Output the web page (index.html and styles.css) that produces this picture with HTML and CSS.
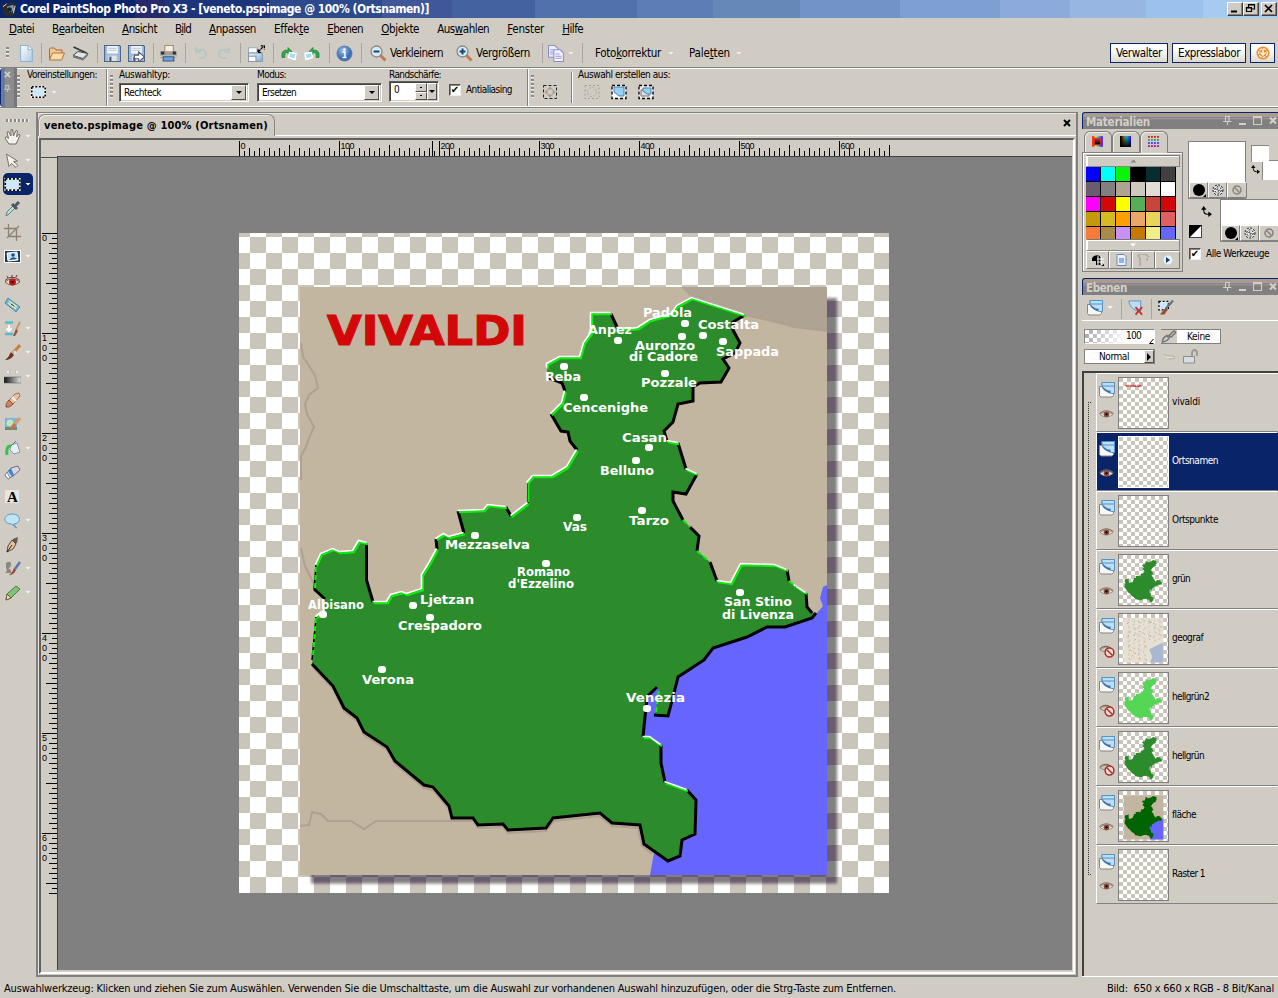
FILE: index.html
```html
<!DOCTYPE html>
<html lang="de">
<head>
<meta charset="utf-8">
<title>Corel PaintShop Photo Pro X3</title>
<link rel="stylesheet" href="styles.css">
</head>
<body>
<svg class="defs" width="0" height="0">
  <defs>
    <linearGradient id="gBlue" x1="0" y1="0" x2="1" y2="1"><stop offset="0" stop-color="#eaf6fd"/><stop offset="1" stop-color="#7fb0dc"/></linearGradient>
    <linearGradient id="gWhite" x1="0" y1="0" x2="1" y2="1"><stop offset="0" stop-color="#ffffff"/><stop offset="1" stop-color="#a9c8e6"/></linearGradient>
    <linearGradient id="gGrad" x1="0" x2="1"><stop offset="0" stop-color="#111"/><stop offset="1" stop-color="#e4e4e4"/></linearGradient>
    <radialGradient id="gInfo" cx=".4" cy=".3"><stop offset="0" stop-color="#9cc3ee"/><stop offset="1" stop-color="#3c6fb5"/></radialGradient>
    <linearGradient id="gRain" x1="0" x2="1"><stop offset="0" stop-color="#f00"/><stop offset=".3" stop-color="#ff0"/><stop offset=".6" stop-color="#0cf"/><stop offset="1" stop-color="#40f"/></linearGradient>
    <linearGradient id="gFade" x1="0" y1="0" x2="0" y2="1"><stop offset="0" stop-color="#000" stop-opacity="0"/><stop offset="1" stop-color="#000"/></linearGradient>
    <linearGradient id="gFadeL" x1="0" x2="1"><stop offset="0" stop-color="#000"/><stop offset=".7" stop-color="#000" stop-opacity="0"/></linearGradient>
  </defs>
  <symbol id="i-new" viewBox="0 0 16 16"><path d="M2.500.5h7l4 4v11h-11z" fill="url(#gWhite)" stroke="#8fb0d0"/><path d="M9.500.5v4h4" fill="#fff" stroke="#8fb0d0"/></symbol>
  <symbol id="i-open" viewBox="0 0 17 16"><path d="M1.500 14V3.500l1-1h4l1.500 2h6v3" fill="#f4c88c" stroke="#a8683a"/><path d="M1.500 14.500l3-7h12l-3 7z" fill="#fbdcaa" stroke="#b27440"/></symbol>
  <symbol id="i-scan" viewBox="0 0 17 16"><path d="M1.500 1.500l13 6" stroke="#333" stroke-width="1.500"/><path d="M1 10l5-4 10 2-5 5z" fill="#dfe3e8" stroke="#444"/><path d="M1 10v2l10 3 5-5V8l-5 5z" fill="#777"/></symbol>
  <symbol id="i-save" viewBox="0 0 16 16"><path d="M.5.5h14l1 1v14H.5z" fill="#9dbde2" stroke="#4c6788"/><path d="M3 1h10v7H3z" fill="#f4f7fa"/><path d="M4 3h8M4 5h8" stroke="#b8c2cc"/><path d="M4 10h8v5H4z" fill="#e2e5e8"/><path d="M5 11h2v4H5z" fill="#42536b"/></symbol>
  <symbol id="i-saveas" viewBox="0 0 16 16"><use href="#i-save"/><path d="M6 9.500h4v-3l5.500 4.800L10 16v-3H6z" fill="#fff" stroke="#556"/></symbol>
  <symbol id="i-print" viewBox="0 0 16 16"><path d="M4.500 0.500h8v6h-8z" fill="#f9ecd8" stroke="#9b8d80"/><path d="M0 6h16v6H0z" fill="#a09e9c"/><path d="M1 6h3v3H1zM12 6h3v3h-3z" fill="#333"/><path d="M0 10h16v1H0z" fill="#ddd"/><path d="M3 11h10v4H3z" fill="#6ba3d8" stroke="#385878"/></symbol>
  <symbol id="i-undo" viewBox="0 0 14 14"><path d="M3 4h5a4 4 0 0 1 0 8H5M2 1v5h5" fill="none" stroke="#b5c8c4" stroke-width="2"/></symbol>
  <symbol id="i-resize" viewBox="0 0 16 16"><path d="M.5 2.500h8v5H.5z" fill="#fff" stroke="#9ab"/><path d="M.5 7.500h13v8H.5z" fill="url(#gBlue)" stroke="#8898a8"/><path d="M.5 10.500h7v5h-7z" fill="#fff" stroke="#89a"/><path d="M10 6l4.500-4.500M12 .8h3.500v3.500M9.500 4v3h3" fill="none" stroke="#000" stroke-width="1.200" stroke-dasharray="2.500 .6"/></symbol>
  <symbol id="i-rot" viewBox="0 0 17 14"><path d="M2 11C1 4 5 3 8 4V1l4 4-4 3V6C5 5.500 4.500 8 5 11z" fill="#2fa84a" stroke="#1c7a34" stroke-width=".7"/><path d="M9.500 6l6.500 1-1 6-6.500-2z" fill="#a5ddf6" stroke="#fff" stroke-width="1.500"/></symbol>
  <symbol id="i-info" viewBox="0 0 17 17"><circle cx="8.500" cy="8.500" r="7.500" fill="url(#gInfo)" stroke="#5878a8"/><circle cx="8.500" cy="4.500" r="1.300" fill="#fff"/><path d="M6.500 7h2.500v5.500h1.500M6.500 12.500h4" fill="none" stroke="#fff" stroke-width="1.400"/></symbol>
  <symbol id="i-zoom" viewBox="0 0 17 17"><path d="M10 10l5.500 5.500" stroke="#c5784a" stroke-width="3"/><circle cx="6.500" cy="6.500" r="5.500" fill="#d6ecfa" stroke="#8b8783" stroke-width="1.300"/><path d="M3.500 6.500h6" stroke="#1c4468" stroke-width="2"/></symbol>
  <symbol id="i-copy" viewBox="0 0 16 16"><path d="M.5.500h6l3 3v8h-9z" fill="#eef" stroke="#8a8cca"/><path d="M5.500 4.500h6l3 3v8h-9z" fill="#f4f4ff" stroke="#8a8cca"/><path d="M7 8.500h4M7 10.500h6M7 12.500h6M2 4.500h3M2 6.500h3M2 8.500h3" stroke="#9a9cda"/></symbol>
  <symbol id="i-sel" viewBox="0 0 15 12"><path d="M.8.8h13.400v10.400H.8z" fill="#cfe8f5" stroke="#fff" stroke-width="1.500"/><path d="M.8.8h13.400v10.400H.8z" fill="none" stroke="#000" stroke-width="1.500" stroke-dasharray="2 1.500"/></symbol>
  <symbol id="i-mod" viewBox="0 0 16 16"><path d="M1.500 1.500h13v13h-13z" fill="none" stroke="#222" stroke-width="1" stroke-dasharray="3 2"/><path d="M8 2.500l3 3H5zM8 13.500l3-3H5zM2.500 8l3-3v6zM13.500 8l-3-3v6z" fill="#a89c90"/></symbol>
  <symbol id="i-dis" viewBox="0 0 16 16"><path d="M1 1.500h14v13H1z" fill="none" stroke="#a89e94" stroke-dasharray="2 2"/><circle cx="8" cy="8" r="4.500" fill="none" stroke="#b0a69c" stroke-dasharray="2 1.500"/></symbol>
  <symbol id="i-selras" viewBox="0 0 16 16"><path d="M1 1.500h14v13H1z" fill="#fff" stroke="#000" stroke-width="1.300" stroke-dasharray="3 2"/><path d="M3 3h10v9H8L3 8z" fill="#9cd0ee" stroke="#4883b8"/></symbol>
  <symbol id="i-selvec" viewBox="0 0 16 16"><path d="M1 1.500h14v13H1z" fill="#eee" stroke="#000" stroke-width="1.300" stroke-dasharray="3 2"/><path d="M3 6h8v6H3z" fill="#ddd" stroke="#777"/><path d="M5 4h8v6H9L5 7z" fill="#9cd0ee" stroke="#4883b8"/></symbol>
  <symbol id="i-layer" viewBox="0 0 16 17"><path d="M.5 5.500h14v9l-1.500 1.500H2l-1.500-1.500z" fill="#f7f7f4" stroke="#858585"/><path d="M3 1.500h12.500v11h-3Q5 10 3 4z" fill="#c0daf2" stroke="#5792c0"/><path d="M3 1.500h12.500V5H3z" fill="#b4e2f8" stroke="#5792c0"/><path d="M2.500 5.500q2 5 9 7V9.500q-3 .5-4.500-1z" fill="#3374b0"/><path d="M7 6h8v5.500h-3V9q-3 0-5-3z" fill="#c4dcf4"/></symbol>
  <symbol id="i-del" viewBox="0 0 17 17"><path d="M1 1.500h12.500v10.500H9Q2.500 9 1 3z" fill="#bcdcf4" stroke="#5792c0"/><path d="M8 8l7 8M15 8l-7 8" stroke="#c8302c" stroke-width="2"/></symbol>
  <symbol id="i-maskbrush" viewBox="0 0 17 17"><path d="M1 2h10v9H1z" fill="#cfe8f5" stroke="#000" stroke-width="1.400" stroke-dasharray="2 2"/><path d="M16 1L8 10" stroke="#69737e" stroke-width="2.500"/><path d="M8 9l2 2-3 5H2z" fill="#9a4c30"/></symbol>
  <symbol id="i-eye" viewBox="0 0 15 9"><path d="M1 5Q7 0 14 5 7 10 1 5z" fill="#f4ece4" stroke="#9c8c7c"/><circle cx="7.500" cy="4.800" r="2.900" fill="#8a5040"/><circle cx="7.500" cy="4.800" r="1.200" fill="#1b0c08"/><path d="M.5 4Q7-1.500 14.500 4" fill="none" stroke="#7c6c60"/></symbol>
  <symbol id="i-eyeoff" viewBox="0 0 17 13"><path d="M1 5Q6 0 13 4 7 9 1 5z" fill="#cfc6ba" stroke="#9a8c7c"/><path d="M.5 4Q6-1 12 3" fill="none" stroke="#6c5c50"/><circle cx="10.500" cy="7.500" r="4.400" fill="#e9dcd6" stroke="#b02c28" stroke-width="1.500"/><path d="M7.500 4.500l6 6" stroke="#b02c28" stroke-width="1.500"/></symbol>
  <symbol id="i-pin" viewBox="0 0 9 9"><path d="M2.500 0v5M6 0v5M2 .5h5M0 5.500h8.500M4.500 5.500V9" stroke="#d4d0c8" stroke-width="1.100" fill="none"/></symbol>
  <symbol id="i-x" viewBox="0 0 8 8"><path d="M1 1l6 6M7 1L1 7" stroke="#d4d0c8" stroke-width="2"/></symbol>
  <symbol id="i-swap" viewBox="0 0 12 12"><path d="M3 3v2q0 4 4 4h2" fill="none" stroke="#000" stroke-width="1.200"/><path d="M0 4l3-4 3 4zM8 6v6l4-3z"/></symbol>
  <symbol id="i-app" viewBox="0 0 16 16"><path d="M0 4l5-3 8-1 2 4-1 8-3 4-7-1-3-4z" fill="#282b30"/><path d="M5 5l7-2 1 6-5 2z" fill="#7e97a5"/><circle cx="8" cy="8" r="2.500" fill="#121f2c"/><path d="M1 5l4-3M12 12l2-8" stroke="#d8dfe3"/></symbol>
  <symbol id="t-0" viewBox="0 0 17 17"><path d="M5 16L1 10l1-1.500 2.500 2L3 4l1.500-.5L7 8 7 1.500h1.500L9.500 8 12 2.500l1.500.5L12.500 9l2.500-3 1 1-3 7-1 2z" fill="#f4f1ed" stroke="#756d66"/></symbol>
  <symbol id="t-1" viewBox="0 0 17 17"><path d="M2.500 2l11 7-4 .5 4.500 4-2 2-4.500-4-2.500 3z" fill="#f4f0ea" stroke="#77706a"/></symbol>
  <symbol id="t-3" viewBox="0 0 17 17"><path d="M2 16l1-4 6-6 2 2-6 6z" fill="#b6e2d0" stroke="#678"/><path d="M8 4l5 5M11 6l4-4" stroke="#4c5668" stroke-width="3"/></symbol>
  <symbol id="t-4" viewBox="0 0 17 17"><path d="M4.500 0v12.500H17M0 4.500h12.500V17M3 14L15 2" fill="none" stroke="#8d8272" stroke-width="1.300"/></symbol>
  <symbol id="t-5" viewBox="0 0 17 17"><path d="M.5 2.500h16v12H.5z" fill="#263850" stroke="#fff"/><path d="M3 5l10-1 1 8-10 1z" fill="#bfe4f7" stroke="#fff"/><circle cx="9" cy="7" r="1.800" fill="#244a78"/><path d="M5 12q4-5 8-1z" fill="#244a78"/></symbol>
  <symbol id="t-6" viewBox="0 0 17 17"><path d="M1 10Q8 4 16 10 8 16 1 10z" fill="#f4ded4" stroke="#806050"/><circle cx="8.500" cy="10" r="3.500" fill="#c01818"/><circle cx="8.500" cy="10" r="1.300" fill="#400"/><path d="M1 8.500Q8 2 16 8.500M3 4l1 2M8 3v2M13 3l-1 2" fill="none" stroke="#633"/></symbol>
  <symbol id="t-7" viewBox="0 0 17 17"><path d="M4 2l12 9-4 5L1 7z" fill="#6ab6dc" stroke="#4e8cb4"/><path d="M5 5l8 6M4 7l8 6" stroke="#f8e6a0" stroke-width="1.500"/><path d="M7 8l3 2" stroke="#234"/></symbol>
  <symbol id="t-8" viewBox="0 0 17 17"><path d="M1 2.500h8M1 14h8" stroke="#54bccc" stroke-width="2.500"/><path d="M5 5v5M2.500 8.500L5 11l2.500-2.500" stroke="#fff" stroke-width="1.800" fill="none"/><path d="M16 2l-4 8" stroke="#c89468" stroke-width="2"/><path d="M12 9l2 2-3 5h-2z" fill="#a04828"/></symbol>
  <symbol id="t-9" viewBox="0 0 17 17"><path d="M16 1L9 9" stroke="#c88040" stroke-width="3"/><path d="M10 7l2 3" stroke="#ddd" stroke-width="2.500"/><path d="M7 8l3 3q-3 5-9 5 4-3 6-8z" fill="#70361e"/></symbol>
  <symbol id="t-10" viewBox="0 0 17 17"><path d="M0 9h17v6H0z" fill="url(#gGrad)" stroke="#555" stroke-width=".5"/><path d="M2 4l3-3v6zM15 4l-3-3v6z" fill="#f7f7f2" stroke="#aaa" stroke-width=".5"/></symbol>
  <symbol id="t-11" viewBox="0 0 17 17"><path d="M11 2l4-1 1 3-7 8-4-4z" fill="#eac29c" stroke="#a07050"/><path d="M8 5l4 4" stroke="#eee" stroke-width="2"/><path d="M5 8l4 4q-3 4-7 3-1-3 3-7z" fill="#d88068" stroke="#8c4a3c"/></symbol>
  <symbol id="t-12" viewBox="0 0 17 17"><path d="M1 2h12v12H1z" fill="#7cb2de"/><circle cx="6" cy="7" r="3.500" fill="#bfe8b4"/><path d="M1 14h12v-3H1z" fill="#5d9470"/><path d="M16 2l-5 6" stroke="#d0a070" stroke-width="3.500"/><path d="M11 8l-4 5" stroke="#c87058" stroke-width="3.500"/></symbol>
  <symbol id="t-13" viewBox="0 0 17 17"><path d="M7 5l6-2 3 9-6 2-4-4z" fill="#e6eef6" stroke="#8898a8"/><path d="M7 6l5-5" stroke="#678"/><path d="M7 6Q2 5 3 15" fill="none" stroke="#38c04c" stroke-width="3"/></symbol>
  <symbol id="t-14" viewBox="0 0 17 17"><path d="M7 4l7-2 2 4-7 6-5 3-3-4z" fill="#d4d8de" stroke="#6b7280"/><path d="M7 4l3 7-2 2-4-6z" fill="#4a84d0"/><path d="M3 8l3 6-2 1-3-4z" fill="#fff" stroke="#889"/></symbol>
  <symbol id="t-15" viewBox="0 0 17 17"><path d="M1 2h14v13H1z" fill="#e8e4de"/><text x="3" y="14" class="serif-a">A</text></symbol>
  <symbol id="t-16" viewBox="0 0 17 17"><path d="M8.500 2c9 0 9 10 1 10l3 4-5-4c-9 0-9-10 1-10z" fill="#bfe4f6" stroke="#5f96bc"/></symbol>
  <symbol id="t-17" viewBox="0 0 17 17"><path d="M9 3l5-2-1 6-2 1-3-3z" fill="#66564c"/><path d="M8 4l4 4-3 5-6 3 1-6z" fill="#e6c49c" stroke="#59493c"/><path d="M3 16l5-7" stroke="#222"/></symbol>
  <symbol id="t-18" viewBox="0 0 17 17"><path d="M2 3q5-3 5 1T4 8q4 2 3 5H1q3-2 1-5z" fill="#8a8782"/><path d="M16 2l-5 7" stroke="#5878b0" stroke-width="2.500"/><path d="M10 8l2 2q-2 5-7 5 4-3 5-7z" fill="#9a4c30"/></symbol>
  <symbol id="t-19" viewBox="0 0 17 17"><path d="M12 2l4 3-9 9-5 2 1-6z" fill="#7cc474" stroke="#4c8048"/><path d="M3 10l4 4-5 2z" fill="#f0d8b4" stroke="#754"/></symbol>

  <path id="region" d="M591 313H611L617 327 630 329 638 328 650 320 672 314 677 306 692 298 745 315 733 322V330L740 343 735 353 723 359 729 368 721 382 700 383 693 387V401L678 404 673 422 664 431 667 441 678 443 686 469 697 474 686 494 673 492V501L683 520 699 536 697 551 710 562 717 581 731 583 741 564 775 565 787 570 789 581 806 593 807 607 812 613 816 613 812 618 785 627 767 627 747 637 713 648 704 660 678 677 673 697 668 716 655 715 659 690 656 687 647 697 643 737 650 737 661 745V763L665 782 687 790 696 800 695 834 682 840 680 856 668 861 644 844 640 825 612 823 600 813 553 818 546 828 508 830 503 824 478 825 473 818H452L449 806 433 787 424 785 395 761 387 747 364 732 357 718 344 708 333 686 312 664 316 617 325 610V599L314 589 316 565 321 554 333 549 340 552 353 551 359 541 367 543V580L373 602H387L391 595 402 592 407 594 422 589V575L430 562 437 549 436 539 444 534 449 537 464 533 458 511 484 510 488 505 506 507 511 516 528 503V483L533 476H552L567 467 577 450 570 441 568 432 561 431 551 414 562 403 565 391 562 383 547 377V364L560 357H580L584 343 592 332Z"/>
  <path id="sea" d="M827 585L823 587 820 598 823 606 816 614 810 610 640 650 630 740 660 840 654 853 650 875H827Z"/>
</svg>

<header class="titlebar">
  <svg class="appicon"><use href="#i-app"/></svg>
  <span class="title" data-w="409">Corel PaintShop Photo Pro X3 - [veneto.pspimage @ 100% (Ortsnamen)]</span>
  <div class="winbtns">
    <b><svg viewBox="0 0 13 11"><path d="M3 8.500h6" stroke="#000" stroke-width="2"/></svg></b>
    <b><svg viewBox="0 0 13 11"><path d="M4.500 4V1.500h6V6H8M4 2h7" fill="none" stroke="#000" stroke-width="1.200"/><path d="M2.500 4.500h5v4h-5zM2 5h6" fill="none" stroke="#000" stroke-width="1.200"/></svg></b>
    <b class="close"><svg viewBox="0 0 13 11"><path d="M3 2l7 7M10 2l-7 7" stroke="#000" stroke-width="1.700"/></svg></b>
  </div>
</header>

<nav class="menu">
  <span data-w="25"><u>D</u>atei</span><span data-w="52">B<u>e</u>arbeiten</span><span data-w="35"><u>A</u>nsicht</span><span data-w="16">B<u>i</u>ld</span><span data-w="47"><u>A</u>npassen</span><span data-w="35">Effek<u>t</u>e</span><span data-w="36"><u>E</u>benen</span><span data-w="38"><u>O</u>bjekte</span><span data-w="52">Aus<u>w</u>ahlen</span><span data-w="37"><u>F</u>enster</span><span data-w="21"><u>H</u>ilfe</span>
</nav>

<div class="toolbar">
  <i class="grip g4"></i>
  <svg class="ic"><use href="#i-new"/></svg><i class="sep"></i>
  <svg class="ic"><use href="#i-open"/></svg><svg class="ic"><use href="#i-scan"/></svg><i class="sep"></i>
  <svg class="ic"><use href="#i-save"/></svg><svg class="ic"><use href="#i-saveas"/></svg><i class="sep"></i>
  <svg class="ic"><use href="#i-print"/></svg><i class="sep"></i>
  <svg class="ic sm"><use href="#i-undo"/></svg><svg class="ic sm flip"><use href="#i-undo"/></svg><i class="sep"></i>
  <svg class="ic"><use href="#i-resize"/></svg><i class="sep"></i>
  <svg class="ic"><use href="#i-rot"/></svg><svg class="ic flip"><use href="#i-rot"/></svg><i class="sep"></i>
  <svg class="ic"><use href="#i-info"/></svg><i class="sep"></i>
  <svg class="ic"><use href="#i-zoom"/></svg><span data-w="53">Verkleinern</span>
  <svg class="ic" viewBox="0 0 17 17"><use href="#i-zoom" width="17" height="17"/><path d="M6.500 3.500v6" stroke="#1c4468" stroke-width="2"/></svg><span data-w="54">Vergrößern</span><i class="sep"></i>
  <svg class="ic"><use href="#i-copy"/></svg><i class="caret"></i><i class="sep"></i>
  <span data-w="66">Foto<u>k</u>orrektur</span><i class="caret"></i><span data-w="41">Pale<u>t</u>ten</span><i class="caret"></i>
  <button class="ws"><span data-w="46">Verwalter</span></button>
  <button class="ws"><span data-w="62">Expresslabor</span></button>
  <button class="ws"><svg class="ic sm" viewBox="0 0 14 14"><circle cx="7" cy="7" r="6.500" fill="#ef8a24"/><circle cx="7" cy="7" r="4.300" fill="none" stroke="#fff" stroke-width="1.200" stroke-dasharray="3 1"/><path d="M7 3v5M4.500 6.500L7 9l2.500-2.500" stroke="#fff" fill="none" stroke-width="1.300"/></svg></button>
</div>

<section class="options">
  <div class="handle"><svg><use href="#i-x"/></svg><svg><use href="#i-pin"/></svg></div>
  <i class="grip g5"></i>
  <div class="opt presets"><label data-w="70">Voreinstellungen:</label><div class="row"><svg class="selico"><use href="#i-sel"/></svg><i class="caret"></i></div></div>
  <i class="vline"></i><i class="grip g5"></i>
  <div class="opt type"><label data-w="51">Auswahltyp:</label><div class="select"><span data-w="37">Rechteck</span><b><i></i></b></div></div>
  <div class="opt mode"><label data-w="29">Modus:</label><div class="select"><span data-w="34">Ersetzen</span><b><i></i></b></div></div>
  <div class="opt feather"><label data-w="52">Randschärfe:</label><div class="spin"><span>0</span><em><b></b><b></b></em><b class="dd"><i></i></b></div></div>
  <div class="anti"><i class="check">✔</i><label data-w="46">Antialiasing</label></div>
  <i class="vline"></i><i class="grip g5"></i>
  <svg class="oi"><use href="#i-mod"/></svg>
  <i class="vline short"></i>
  <div class="opt make"><label data-w="92">Auswahl erstellen aus:</label><div class="row"><svg class="oi"><use href="#i-dis"/></svg><svg class="oi"><use href="#i-selras"/></svg><svg class="oi"><use href="#i-selvec"/></svg></div></div>
</section>

<main class="work">
  <aside class="tools" id="tools"><i class="hgrip"></i></aside>
  <section class="doc">
    <div class="tabs"><div class="tab"><span data-w="224">veneto.pspimage @ 100% (Ortsnamen)</span></div><div class="tabfill"><svg viewBox="0 0 8 8"><path d="M1 1l6 6M7 1L1 7" stroke="#000" stroke-width="2"/></svg></div></div>
    <div class="frame">
      <div class="corner"></div>
      <svg class="hruler" id="hruler" viewBox="57 140 1015 16"></svg>
      <svg class="vruler" id="vruler" viewBox="41 157 16 813"></svg>
      <div class="stage">
        <svg class="canvas" viewBox="239 233 650 660" width="650" height="660">
          <defs>
            <pattern id="chk" x="250" y="237" width="32" height="32" patternUnits="userSpaceOnUse"><path d="M0 0h32v32H0z" fill="#fff"/><path d="M0 0h16v16H0zM16 16h16v16H16z" fill="#cac5ba"/></pattern>
            <pattern id="chkd" x="250" y="237" width="32" height="32" patternUnits="userSpaceOnUse"><path d="M0 0h32v32H0z" fill="#808080"/><path d="M0 0h16v16H0zM16 16h16v16H16z" fill="#6a5b6e"/></pattern>
            <filter id="bl"><feGaussianBlur stdDeviation="1.500"/></filter>
            <mask id="sm"><rect x="311" y="298" width="526" height="585.500" fill="#fff" filter="url(#bl)"/></mask>
          </defs>
          <rect x="239" y="233" width="650" height="660" fill="url(#chk)" shape-rendering="crispEdges"/>
          <rect x="300" y="287" width="550" height="606" fill="url(#chkd)" mask="url(#sm)"/>
          <rect x="300" y="287" width="527" height="588" fill="#c2b6a0"/>
          <path d="M681 287L692 298 745 315 790 325 827 331V287Z" fill="#afa393"/>
          <g fill="none" stroke="#afa08f" stroke-width="2">
            <path d="M745 315L772 321 795 327 827 331"/>
            <path d="M301 343L303 357 315 375 318 388 309 395 305 404 307 414 314 427 309 438 306 447 301 456V480"/>
            <path d="M301 548L305 566 314 584M300 826L309 825 312 812 321 814 328 821H351L364 829 376 821H452"/>
            <path d="M313 667L333 689 344 711 358 722 364 735 387 750 395 764 424 788 433 790 449 809 452 821H473L478 828 503 827 508 833 546 831 554 821 599 816 612 826 638 828 642 846 652 854"/>
          </g>
          <use href="#sea" fill="#6666ff"/>
          <use href="#region" fill="#2c8c2c"/>
          <g fill="none" stroke="#000" stroke-width="3">
            <path d="M611 314L617 327M745 315L733 322V330L740 343 735 353 723 359 729 368 721 382 700 383 693 387V401L678 404 673 422 664 431 667 441M678 443L686 469M697 474L686 494 673 492V501L683 520M690 527L699 536 697 551M710 562L717 581M787 570L789 581M806 593L807 607 812 613M816 613L812 618 785 627 767 627 747 637 713 648 704 660 678 677 673 697 668 716 654 715M657 687L647 697 643 737M661 745V763L665 782M687 790L696 800 695 834 682 840 680 856 668 861 644 844 640 825 612 823 600 813 553 818 546 828 508 830 503 824 478 825 473 818H452L449 806 433 787 424 785 395 761 387 747 364 732 357 718 344 708 333 686 312 664M325 599L314 589M366.500 543V580L373 602M437 549L436 539M464 533L458 511M506 507L511 516M577 450L570 441 568 432 561 431 551 414M565 391L562 383 547 377"/>
            <path d="M528 503V483M312 660L316 617M314 589L316 565" stroke-width="1.500"/>
          </g>
          <g id="lights" fill="none" stroke-width="2">
            <path id="lite" d="M591 330V313H611M617 328L630 329 638 328 650 320 672 314 677 306 692 298 745 315M667 441L678 443M686 469L697 474M717 581L731 583 741 564 775 565 787 570M794 585L806 593M643 737L650 737 661 745M665 782L687 790M316 565L321 554 333 549 340 552 353 551 359 541 367 543M373 602H387L391 595 402 592 407 594 422 589V575L430 562 437 549M436 539L444 534 449 537 464 533M458 511L484 510 488 505 506 507M511 516L528 503M527 483L533 476H552L567 467 577 450M551 414L562 403 565 391M547 368V364L560 357H580L584 343 592 332M316 617L325 610" stroke="#0af00a" transform="translate(.9 1.200)"/>
            <use href="#liteW"/>
            <path d="M313 655L316 617M315 588L316 565M683 520L690 527M697 551L710 562M789 581L796 587M656 712L659 690" stroke="#0af00a" stroke-dasharray="5 3"/>
            <path d="M528.500 502V482M592.500 332V314" stroke="#0af00a" stroke-width="1.500"/>
          </g>
          <g fill="#fff" id="dots"></g>
          <g id="labels" class="city"></g>
          <text class="vivaldi" x="327" y="345" textLength="200" lengthAdjust="spacingAndGlyphs">VIVALDI</text>
        </svg>
      </div>
    </div>
  </section>
  <aside class="panels">
    <section class="panel materials">
      <h2><span data-w="64">Materialien</span><svg><use href="#i-pin"/></svg><i class="min"></i><i class="max"></i><svg><use href="#i-x"/></svg></h2>
      <div class="mat">
        <div class="palette">
          <div class="ptabs">
            <div><svg viewBox="0 0 12 12"><rect x="1" y="1" width="10" height="10" fill="#c33" stroke="url(#gRain)" stroke-width="1.500"/><path d="M3 3h6v6H3z" fill="url(#gFade)"/></svg></div>
            <div><svg viewBox="0 0 12 12"><path d="M0 0h12v12H0z" fill="url(#gRain)"/><path d="M0 0h12v12H0z" fill="url(#gFade)"/><path d="M0 0h12v12H0z" fill="url(#gFadeL)"/></svg></div>
            <div class="on"><svg viewBox="0 0 12 12"><path d="M0 1h12" stroke="#c22" stroke-width="2" stroke-dasharray="2 1.300"/><path d="M0 4.300h12" stroke="#395" stroke-width="2" stroke-dasharray="2 1.300"/><path d="M0 7.600h12" stroke="#44f" stroke-width="2" stroke-dasharray="2 1.300"/><path d="M0 11h12" stroke="#a0a" stroke-width="2" stroke-dasharray="2 1.300"/></svg></div>
          </div>
          <div class="pbox">
            <div class="scroll"><svg viewBox="0 0 8 4"><path d="M1 3.500h6L5 .5z" fill="#888"/></svg></div>
            <div class="sw" id="sw"></div>
            <div class="scroll"><svg viewBox="0 0 8 4"><path d="M1 .5h6l-3 3z" fill="#fff"/></svg></div>
            <div class="pbtns">
              <div><svg viewBox="0 0 14 12"><path d="M1 5a5 4 0 0 1 9-2v8H5V7H1z"/><path d="M7 2v9M10 2v9M6 5h7M6 8h7" stroke="#fff"/><path d="M13 10v2h-3z"/></svg></div>
              <div><svg viewBox="0 0 14 12"><path d="M3 .5h7l2 2v9H3z" fill="#eef" stroke="#668cc8"/><path d="M5 4h5v5H5z" fill="#8cb4e8"/></svg></div>
              <div><svg viewBox="0 0 14 12"><path d="M3 12V4L1 2l2-2h5l4 3M10 4v3" fill="none" stroke="#aaa69e" stroke-width="1.500"/></svg></div>
              <div><svg viewBox="0 0 14 12"><circle cx="7" cy="6" r="4.500" fill="#e8f0f8"/><path d="M5 3l4 3-4 3z" fill="#123c78"/></svg></div>
            </div>
          </div>
        </div>
        <div class="colors">
          <div class="fg"><div class="swatch"></div><div class="trio"></div></div>
          <div class="mini"><span></span><span></span><svg><use href="#i-swap"/></svg></div>
          <div class="swapcol"><svg><use href="#i-swap"/></svg><svg class="bw" viewBox="0 0 13 13"><path d="M0 0h13v13H0z" fill="#fff" stroke="#444" stroke-width="2"/><path d="M0 0h13L0 13z"/></svg></div>
          <div class="bg"><div class="swatch"></div><div class="trio"></div></div>
          <div class="all"><i class="check">✔</i><label data-w="63">Alle Werkzeuge</label></div>
        </div>
      </div>
    </section>
    <section class="panel layers">
      <h2><span data-w="41">Ebenen</span><svg><use href="#i-pin"/></svg><i class="min"></i><i class="max"></i><svg><use href="#i-x"/></svg></h2>
      <div class="lbar"><svg><use href="#i-layer"/></svg><i class="caret"></i><i class="sep"></i><svg><use href="#i-del"/></svg><i class="sep"></i><svg><use href="#i-maskbrush"/></svg></div>
      <div class="lopts">
        <div class="opacity"><span data-w="15">100</span><svg viewBox="0 0 5 5"><path d="M4.500 0L.5 4.500h4" fill="none" stroke="#000"/></svg></div>
        <div class="link"><svg viewBox="0 0 16 14"><path d="M1 13q0-5 5-7l3 1q-2 5-8 6zM6 8l6-6q3-2 3 1l-5 5" fill="none" stroke="#777" stroke-width="1.700"/></svg><span data-w="23">Keine</span></div>
        <div class="blend"><span data-w="30">Normal</span><b><i></i></b></div>
        <div class="locks"><svg viewBox="0 0 12 7"><path d="M0 1l4 2h7v3H5" fill="#e4e0d4" stroke="#aaa69c"/></svg><svg viewBox="0 0 15 15"><path d="M9 7V4q0-3 2.500-3T14 4v3" fill="none" stroke="#999" stroke-width="1.800"/><path d="M.5 7.500h11v6.500H.5z" fill="#d8dde2" stroke="#8c8c8c"/></svg></div>
      </div>
      <div class="list"><div class="tree"></div><div class="rows" id="rows"></div></div>
    </section>
  </aside>
</main>

<footer class="status"><span data-w="892">Auswahlwerkzeug: Klicken und ziehen Sie zum Auswählen. Verwenden Sie die Umschalttaste, um die Auswahl zur vorhandenen Auswahl hinzuzufügen, oder die Strg-Taste zum Entfernen.</span><span class="pre" data-w="167">Bild:  650 x 660 x RGB - 8 Bit/Kanal</span></footer>
<script src="script.js"></script>
</body>
</html>
```

FILE: styles.css
```css
* { box-sizing: border-box; }
html, body { margin: 0; height: 998px; overflow: hidden; }
body {
  width: 1278px;
  display: grid;
  grid-template-rows: 18px 22px 27px 41px 868px 22px;
  background: #d0ccc4;
  color: #000;
  font: 11px/14px "DejaVu Sans Condensed", "DejaVu Sans", sans-serif;
  font-stretch: condensed;
}
svg { display: block; flex: none; }
.defs { position: absolute; }
i, em { font-style: normal; }
span, label { white-space: nowrap; }
.pre { white-space: pre; }
u { text-underline-offset: 1px; text-decoration-thickness: 1px; }
.serif-a { font: bold 15px "Liberation Serif", serif; }

/* title bar */
.titlebar {
  display: flex; align-items: center; padding: 0 1px 0 2px;
  color: #fff; font-weight: bold; font-size: 12px;
  background: linear-gradient(90deg, #0a246a 135px, #272a6a 135px 165px, #1c357a 165px 270px, #2c4a8c 270px 382px, #40589a 382px 452px, #44629f 452px 535px, #5071ac 535px 637px, #5c7db5 637px 713px, #6688b9 713px 800px, #7193c6 800px 900px, #7d9fd2 900px 1000px, #8cabdc 1000px 1070px, #97b6e2 1070px 1146px, #9ac2ec 1146px 1203px, #a6caf0 1203px);
}
.appicon { width: 15px; height: 15px; margin-right: 3px; }
.winbtns { display: flex; margin-left: auto; }
.winbtns b { width: 16px; height: 14px; background: #d0ccc4; border: 1px solid; border-color: #fff #404040 #404040 #fff; box-shadow: inset -1px -1px #808080; }
.winbtns .close { margin-left: 2px; }
.winbtns svg { width: 13px; height: 11px; }

.menu { display: flex; gap: 18px; padding: 4px 0 0 9px; font-size: 11.5px; }

/* main toolbar */
.toolbar {
  display: grid; align-items: center; padding: 0 0 1px 6px; font-size: 11.5px;
  grid-template-columns: 12px 23px 7px 24px 25px 7px 24px 25px 7px 25px 9px 23px 23px 8px 25px 7px 24px 25px 7px 25px 9px 20px 66px 20px 66px 6px 20px 14px 13px 73px 21px 47px 374px 62px 78px 25px;
}
.ic { width: 17px; height: 17px; }
.ic.sm { width: 14px; height: 14px; }
.flip { transform: scaleX(-1); }
.sep { width: 1px; height: 20px; background: #aaa69e; }
.caret { display: block; width: 6px; height: 3px; background: #f6f4f0; clip-path: polygon(0 0, 100% 0, 50% 100%); }
.ws { height: 20px; padding: 0; border: 1px solid #0a246a; font: inherit; color: #000; background: linear-gradient(#fff 30%, #dcd8cc); display: flex; align-items: center; justify-content: center; }
.ws:nth-last-child(3) { width: 58px; }
.ws:nth-last-child(2) { width: 74px; }
.grip { width: 4px; background: repeating-linear-gradient(#8c8882 0 2px, #f4f2ee 2px 3px, transparent 3px 4px); }
.g4 { height: 12px; width: 3px; }

/* tool options */
.options { display: flex; align-items: flex-start; border-top: 1px solid #808080; border-bottom: 1px solid #808080; box-shadow: inset 0 1px #fff, inset 0 -1px #fff; font-size: 10px; line-height: 12px; }
.handle { width: 17px; height: 39px; background: linear-gradient(90deg, #6b7a9c 4px, #8c8c8c 4px 13px, #777 13px); border-left: 1px solid #0a246a; border-radius: 4px 0 0 4px; display: flex; flex-direction: column; align-items: center; gap: 5px; padding: 2px 3px 0 0; }
.handle svg { width: 7px; height: 9px; }
.g5 { width: 3px; height: 24px; margin-top: 7px; }
.vline { width: 2px; height: 37px; margin-top: 1px; border-left: 1px solid #808080; border-right: 1px solid #fff; }
.vline.short { height: 31px; margin: 4px 5px 0 13px; }
.vline + .g5 { margin-left: 2px; }
.opt { padding-top: 1px; display: flex; flex-direction: column; align-items: flex-start; }
.row { display: flex; align-items: center; }
.presets { width: 79px; margin-left: 7px; }
.presets .row { padding: 5px 0 0 4px; gap: 5px; }
.selico { width: 15px; height: 12px; }
.type { margin-left: 6px; width: 138px; }
.mode { width: 132px; }
.feather { width: 60px; }
.select, .spin { display: flex; background: #fff; border: 1px solid; border-color: #606060 #fff #fff #606060; box-shadow: inset 1px 1px #404040, inset -1px -1px #d0ccc4; height: 19px; margin-top: 2px; padding: 2px; }
.select { width: 130px; align-items: center; justify-content: space-between; }
.mode .select { width: 125px; }
.select > span { margin-left: 2px; }
.select b, .spin b, .blend b { background: #d0ccc4; border: 1px solid; border-color: #fff #505050 #505050 #fff; display: grid; place-items: center; }
.select b { width: 15px; height: 15px; }
.select b i, .dd i { border: 3px solid transparent; border-top-color: #000; border-bottom: 0; }
.spin { width: 50px; height: 21px; margin-top: 0; padding: 1px; }
.spin > span { width: 24px; padding: 1px 0 0 3px; }
.spin em { display: grid; width: 12px; }
.spin em b::after { content: ""; width: 2px; height: 1px; background: #000; }
.spin .dd { flex: 1; }
.anti { display: flex; gap: 5px; padding: 16px 0 0; width: 78px; }
.check { display: block; width: 12px; height: 12px; background: #fff; border: 1px solid #505050; border-right-color: #eee; border-bottom-color: #eee; font: 10px/10px "DejaVu Sans", sans-serif; text-align: center; box-shadow: inset 1px 1px #888; }
.oi { width: 16px; height: 16px; }
.options > .oi { margin: 16px 0 0 8px; }
.make .row { padding: 3px 0 0 6px; gap: 11px; }

/* work area */
.work { display: grid; grid-template-columns: 36px 1042px 200px; border-top: 1px solid #d8d5ce; }
.tools { padding-top: 12px; display: grid; grid-template-rows: 4px; grid-auto-rows: 24px; align-content: start; }
.hgrip { width: 24px; height: 3px; margin: -2px 0 0 6px; background: repeating-linear-gradient(90deg, #8c8882 0 2px, #f4f2ee 2px 3px, transparent 3px 4px); }
.tool { display: flex; align-items: center; gap: 4px; width: 30px; height: 22px; margin: 0 0 2px 3px; padding-left: 1px; border-radius: 5px; }
.tool svg { width: 17px; height: 17px; }
.tool.on { background: #0a246a; }
.tool.on svg { height: 13px; }

.doc { margin-top: 3px; border: 1px solid #808080; border-width: 1px 2px 2px; height: 865px; box-shadow: inset 1px 1px #e8e6e2; display: grid; grid-template-rows: 23px 1fr; }
.tabs { display: flex; padding-top: 1px; }
.tab { width: 237px; border: 1px solid #8c8780; border-bottom: 0; border-radius: 7px 7px 0 0; padding: 4px 0 0 5px; font-weight: bold; box-shadow: inset 1px 1px #eeece8; }
.tabfill { flex: 1; border-bottom: 1px solid #fff; display: flex; justify-content: flex-end; padding: 5px 5px 0 0; }
.tabfill svg { width: 8px; height: 8px; }
.frame { margin: 2px 1px 1px 1px; border: 2px solid; border-color: #606060 #fff #fff #606060; display: grid; grid-template: 16px 814px / 16px 1015px; }
.corner { border-bottom: 1px solid #505050; height: 18px; }
.hruler { width: 1015px; height: 16px; }
.vruler { width: 16px; height: 813px; margin-top: 1px; }
.ticks { stroke: #000; stroke-width: 1; shape-rendering: crispEdges; }
.num { font: 9px "Liberation Sans", sans-serif; }
.stage { background: #808080; border: 1px solid #404040; border-right: 0; border-bottom: 0; padding: 76px 0 0 181px; height: 814px; }
.city text { font: bold 12px "DejaVu Sans", sans-serif; fill: #fff; }
.vivaldi { font: bold 41.500px "DejaVu Sans", sans-serif; fill: #d20808; stroke: #d20808; stroke-width: 1.2; }

/* side panels */
.panels { padding: 3px 0 0 4px; display: grid; grid-template-rows: 166px 699px; }
.panel h2 { margin: 0; height: 17px; display: flex; align-items: center; padding: 1px 1px 0 3px; font-size: 11.500px; line-height: 14px; color: #d4d0c8; border: solid #0a246a; border-width: 1px 0 0 1px; border-radius: 3px 0 0 0; background: linear-gradient(#ac9a8c 4px, #7885a8 4px 5px, #9a9088 5px 6px, #808080 7px); }
.panel h2 span { margin-right: auto; }
.panel h2 svg { width: 9px; height: 9px; margin: -3px 0 0 7px; }
.min { width: 7px; height: 2px; background: #d4d0c8; margin: 4px 0 0 7px; }
.max { width: 9px; height: 9px; border: 1px solid #d4d0c8; border-top-width: 2px; margin: -3px 0 0 7px; }
.panel h2 svg:last-child { width: 8px; }
.mat { display: grid; grid-template-columns: 106px 90px; }
.ptabs { display: flex; padding: 2px 0 0 2px; height: 23px; }
.ptabs div { width: 28px; border: 1px solid #808080; border-bottom: 0; border-radius: 6px 6px 0 0; box-shadow: inset 1px 1px #f0eeea; padding: 4px 0 0 7px; }
.ptabs svg { width: 11px; height: 11px; }
.ptabs .on { background: #d0ccc4; margin-bottom: -1px; z-index: 1; }
.pbox { width: 101px; height: 120px; border: 1px solid #808080; padding: 2px 2px 2px 3px; box-shadow: inset 1px 1px #fff; }
.scroll { height: 12px; width: 94px; border: 1px solid; border-color: #777 #888 #888 #fff; display: grid; place-items: center; box-shadow: inset 1px 1px #fff; }
.scroll svg { width: 8px; height: 4px; }
.sw { display: grid; grid-template-columns: repeat(6, 15px); grid-auto-rows: 15px; width: 90px; height: 72px; overflow: hidden; background: #000; }
.sw i { margin: 0 1px 1px 0; }
.pbtns { display: grid; grid-template-columns: 23px 23px 23px 25px; height: 18px; }
.pbtns div { border: 1px solid; border-color: #fff #777 #777 #fff; display: grid; place-items: center; }
.pbtns svg { width: 14px; height: 12px; }
.colors { display: grid; grid-template: 58px 44px 26px / 31px 27px 32px; padding-top: 12px; }
.fg { grid-area: 1 / 1 / 2 / 3; }
.mini { grid-area: 1 / 3; display: grid; grid-template: 17px 18px / 12px 6px 12px; padding: 4px 0 0 5px; align-content: start; }
.mini span:first-child { grid-area: 1 / 1 / 2 / 3; background: #fff; border: 1px solid #888; border-width: 1px 0 0 1px; }
.mini span:nth-child(2) { grid-area: 1 / 2 / 3 / 4; background: #fff; border: 1px solid #888; border-width: 1px 0 0 1px; margin: 15px 0 0 -1px; z-index: -1; }
.mini svg { grid-area: 2 / 1; width: 9px; height: 9px; margin-top: 3px; }
.swapcol { grid-area: 2 / 1; padding-left: 13px; }
.swapcol svg { width: 11px; height: 11px; margin-top: 7px; }
.swapcol .bw { margin: 8px 0 0 -12px; width: 13px; height: 13px; }
.bg { grid-area: 2 / 2 / 3 / 4; margin-left: 1px; overflow: hidden; }
.swatch { background: #fff; border: 1px solid #808080; border-bottom: 0; height: 41px; }
.bg .swatch { height: 26px; border-right: 0; }
.fg .swatch, .fg .trio { width: 58px; }
.trio { display: grid; grid-template-columns: 19px 19px 20px; height: 17px; border: solid #808080; border-width: 0 0 1px 1px; }
.trio div { border: 1px solid; border-color: #fff #808080 #808080 #fff; display: grid; place-items: center; }
.trio svg { width: 14px; height: 14px; }
.all { grid-area: 3 / 1 / 4 / 4; display: flex; gap: 5px; padding: 5px 0 0 1px; font-size: 10px; line-height: 12px; }

.lbar { display: flex; align-items: center; height: 26px; border-bottom: 1px solid #fff; padding-left: 5px; }
.lbar svg { width: 16px; height: 17px; }
.lbar .caret { margin: 0 8px 0 4px; }
.lbar .sep + svg { margin: 0 7px 0 6px; }
.lbar .sep { margin-top: 2px; }
.lopts { display: grid; grid-template-columns: 71px 60px; gap: 5px 6px; padding: 8px 0 0 2px; height: 50px; grid-auto-rows: 15px; font-size: 10px; line-height: 12px; align-content: start; }
.opacity { display: flex; border: 1px solid; border-color: #888 #fff #fff #888; background: linear-gradient(90deg, #d0ccc400, #fff 60%), conic-gradient(#aaa 25%, #fff 0 50%, #aaa 0 75%, #fff 0) 0 0 / 8px 8px; padding-left: 41px; }
.opacity svg { width: 5px; height: 5px; margin: 9px 0 0 8px; }
.link { display: flex; align-items: center; background: #fff; border: 1px solid #808080; border-left: 0; gap: 10px; }
.link svg { width: 16px; height: 13px; background: #d0ccc4; }
.blend { display: flex; align-items: center; background: #fff; border: 1px solid #808080; justify-content: space-between; padding-left: 14px; }
.blend b { width: 10px; height: 13px; }
.blend b i { border: 4px solid transparent; border-left-color: #000; border-right: 0; }
.locks { display: flex; gap: 8px; padding-left: 3px; align-items: center; }
.locks svg { width: 15px; height: 15px; }
.locks svg:first-child { width: 11px; height: 7px; }
.list { height: 605px; border: solid #404040; border-width: 2px 0 0 2px; display: grid; grid-template-columns: 12px 182px; font-size: 10px; line-height: 12px; box-shadow: 0 1px #fff; }
.tree { margin: 29px 5px 0 4px; height: 473px; border: 1px dotted #333; border-right: 0; }
.layer { height: 59px; border: 1px solid; border-color: #fff #d0ccc4 #808080 #fff; display: grid; grid-template-columns: 20px 54px 1fr; padding: 3px 0 0 1px; }
.layer.on { background: #0a246a; color: #fff; border-color: #fff #0a246a #808080 #fff; }
.layer .icons { padding: 4px 0 0 1px; display: grid; grid-template-rows: 25px 14px; }
.layer .icons svg:first-child { width: 16px; height: 17px; }
.vis { width: 15px; height: 10px; margin-top: 3px; }
.vis.off { width: 17px; height: 13px; }
.thumb { width: 51px; height: 52px; border: 1px solid #808080; background: conic-gradient(#fff 25%, #cac5ba 0 50%, #fff 0 75%, #cac5ba 0) 0 0 / 8px 8px; overflow: hidden; }
.layer.on .thumb { border-color: #fff; }
.thumb svg { width: 49px; height: 50px; }
.layer > span { padding-top: 19px; }
.status { display: flex; justify-content: space-between; padding: 6px 4px 0 4px; }
```

FILE: script.js
```js
const $ = (id) => document.getElementById(id);

// Toolbox entries that open a flyout show a caret
const flyouts = [0, 1, 2, 5, 8, 9, 10, 13, 16, 18, 19];
for (let i = 0; i < 20; i++) {
  const icon = i === 2 ? 'i-sel' : 't-' + i;
  $('tools').insertAdjacentHTML('beforeend',
    `<div class="tool${i === 2 ? ' on' : ''}"><svg><use href="#${icon}"/></svg>${flyouts.includes(i) ? '<i class="caret"></i>' : ''}</div>`);
}

// Rulers
let h = '', hn = '', v = '', vn = '';
for (let p = 0; p <= 650; p += 5) {
  const top = p % 100 === 0 ? 141 : p % 50 === 0 ? 145 : p % 10 === 0 ? 148 : 151;
  h += `M${239.5 + p} ${top}V156`;
  if (p % 100 === 0) hn += `<text class="num" x="${240.5 + p}" y="148.5" textLength="${p ? 14 : 5}">${p}</text>`;
}
for (let p = 0; p <= 660; p += 5) {
  const left = p % 100 === 0 ? 42 : p % 50 === 0 ? 46 : p % 10 === 0 ? 49 : 52;
  v += `M${left} ${233.5 + p}H57`;
  if (p % 100 === 0) [...String(p)].forEach((d, k) => { vn += `<text class="num" x="42" y="${241 + p + k * 10}">${d}</text>`; });
}
$('hruler').innerHTML = `<path class="ticks" d="${h}M432.500 141V156"/>${hn}`;
$('vruler').innerHTML = `<path class="ticks" d="${v}"/>${vn}`;

// White highlight above the lime bevel
const lite = $('lite').cloneNode();
lite.id = 'liteW';
lite.setAttribute('stroke', '#fff');
lite.setAttribute('stroke-width', '1.6');
lite.setAttribute('transform', 'translate(-.5 -.5)');
$('lights').querySelector('use').replaceWith(lite);

// Places: name, x start, x end, baseline
const names = [['Padola', 643, 692, 317], ['Costalta', 698, 759, 329], ['Anpez', 588, 632, 334], ['Auronzo', 635, 695, 350], ['di Cadore', 629, 698, 361], ['Sappada', 716, 779, 356], ['Pozzale', 641, 697, 387], ['Reba', 545, 581, 381], ['Cencenighe', 563, 648, 412], ['Casan', 622, 667, 442], ['Belluno', 600, 654, 475], ['Tarzo', 629, 669, 525], ['Vas', 563, 587, 531], ['Mezzaselva', 445, 530, 549], ['Romano', 517, 570, 576], ["d'Ezzelino", 508, 574, 588], ['Ljetzan', 420, 474, 604], ['Crespadoro', 398, 482, 630], ['Albisano', 308, 364, 609], ['Verona', 362, 414, 684], ['Venezia', 626, 685, 702], ['San Stino', 724, 792, 606], ['di Livenza', 722, 794, 619]];
$('labels').innerHTML = names.map(([t, a, b, y]) => `<text x="${a}" y="${y}" textLength="${b - a}" lengthAdjust="spacingAndGlyphs">${t}</text>`).join('');
const dots = [[685, 323], [703, 335], [682, 336], [723, 341], [618, 340], [564, 366], [665, 373], [584, 397], [649, 447], [636, 460], [642, 510], [577, 517], [475, 535], [546, 563], [413, 605], [430, 617], [323, 614], [382, 669], [647, 708], [740, 592]];
$('dots').innerHTML = dots.map(([x, y]) => `<rect x="${x - 4}" y="${y - 3}" width="8" height="7" rx="3"/>`).join('');

// Palette
const colors = ['#00f', '#0ff', '#08f408', '#000', '#062e30', '#404040', '#6a5b70', '#808080', '#afa393', '#cfc8bc', '#e2ddd5', '#fff', '#f0f', '#d20808', '#ff0', '#56ae56', '#c8443c', '#d20808', '#c49a08', '#d4bc20', '#ff9f08', '#eca766', '#e8d458', '#e06060', '#f67a3a', '#aa8a48', '#c890f8', '#c67800', '#f0ee88', '#6666ff'];
$('sw').innerHTML = colors.map((c) => `<i style="background:${c}"></i>`).join('');
document.querySelectorAll('.trio').forEach((t) => {
  t.innerHTML = '<div><svg viewBox="0 0 14 14"><circle cx="7" cy="7" r="6"/><path d="M14 11v3h-3z"/></svg></div><div><svg viewBox="0 0 14 14"><circle cx="7" cy="7" r="5" fill="#eee"/><g fill="none" stroke="#111" stroke-dasharray="2 1.300"><circle cx="7" cy="7" r="5"/><circle cx="7" cy="7" r="3.200"/><circle cx="7" cy="7" r="1.200"/></g></svg></div><div><svg viewBox="0 0 14 14"><circle cx="7" cy="7" r="4" fill="none" stroke="#85827c" stroke-width="1.500"/><path d="M4.500 4.500l5 5" stroke="#85827c" stroke-width="1.500"/></svg></div>';
});

// Layers
const land = (c) => `<use href="#region" fill="${c}"/>`;
const ground = (c) => `<rect x="300" y="287" width="527" height="588" fill="${c}"/>`;
let roads = '';
for (let i = 0; i < 130; i++) {
  const x = 305 + (i * 137) % 480, y = 295 + (i * 211) % 540;
  if (x > 620 && y > 590) continue;
  roads += `<path d="M${x} ${y}l${(i * 31) % 60 - 20} ${(i * 17) % 50 - 20}" stroke="${['#d8a478', '#a4bc90', '#b8b8c4', '#b0aca8', '#c4c0b8'][i % 5]}" stroke-width="12"/>`;
}
const layers = [
  ['vivaldi', 28, 1, '<text class="vivaldi" x="327" y="350" textLength="210" lengthAdjust="spacingAndGlyphs" stroke-width="5">VIVALDI</text>'],
  ['Ortsnamen', 46, 1, ''], ['Ortspunkte', 46, 1, ''], ['grün', 18, 1, land('#2c8c2c')],
  ['geograf', 31, 0, ground('#e6dfd2') + roads + '<path d="M827 610L740 650 640 700 680 800 650 875H827Z" fill="#a9b8d0"/>'],
  ['hellgrün2', 37, 0, land('#56d656')], ['hellgrün', 32, 0, land('#2c8c2c')],
  ['fläche', 24, 1, ground('#c2b6a0') + '<use href="#sea" fill="#6666ff"/>' + land('#006400')], ['Raster 1', 33, 1, '']];
$('rows').innerHTML = layers.map(([n, w, on, art], i) =>
  `<div class="layer${i === 1 ? ' on' : ''}"><div class="icons"><svg><use href="#i-layer"/></svg><svg class="vis${on ? '' : ' off'}"><use href="#${on ? 'i-eye' : 'i-eyeoff'}"/></svg></div><div class="thumb"><svg viewBox="239 233 650 660">${art}</svg></div><span data-w="${w}">${n}</span></div>`).join('');

// Track interface text to its measured width
document.querySelectorAll('[data-w]').forEach((el) => {
  const r = document.createRange();
  r.selectNodeContents(el);
  const extra = Number(el.dataset.w) - r.getBoundingClientRect().width;
  el.style.letterSpacing = extra / el.textContent.length + 'px';
});
```
